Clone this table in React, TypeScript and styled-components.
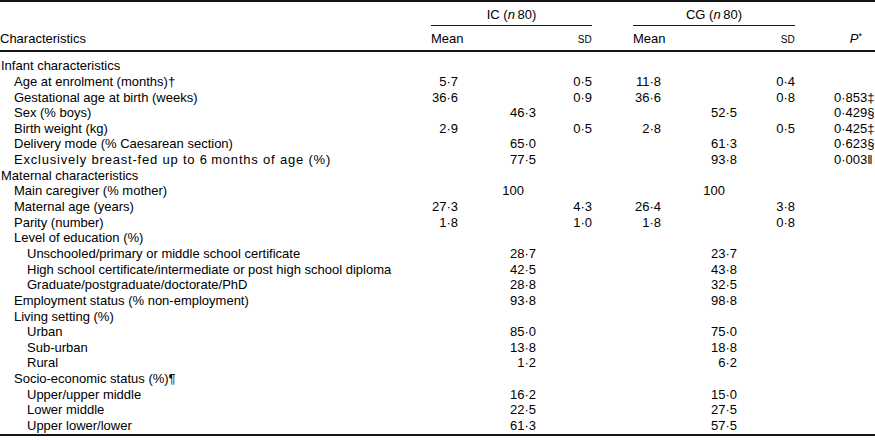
/**
 * App.tsx
 * -------
 * - Baseline characteristics table (IC vs CG), journal style.
 * - Thick top / bottom rules, thin spanner rules under the group headings.
 * - Values right aligned per column, P values left aligned.
 */

import styled, { createGlobalStyle } from 'styled-components';

const GlobalStyle = createGlobalStyle`
  html, body {
    margin: 0;
    padding: 0;
    background: #ffffff;
  }
`;

const RULE = '#161616';

const Table = styled.table`
  width: 875px;
  table-layout: fixed;
  border-collapse: separate;
  border-spacing: 0;
  border-top: 2px solid ${RULE};
  border-bottom: 2px solid ${RULE};
  font-family: 'Liberation Sans', Arial, Helvetica, sans-serif;
  font-size: 13px;
  color: #000000;
`;

/** Group heading row (IC / CG) */
const GroupCell = styled.th<{ $rule?: boolean }>`
  padding: 5px 0 2.4px;
  line-height: 15.6px;
  font-weight: 400;
  text-align: center;
  white-space: nowrap;
  border-bottom: ${({ $rule }) => ($rule ? `1px solid ${RULE}` : 'none')};
`;

/** Column heading row (Characteristics / Mean / SD / P) */
const HeadCell = styled.th<{ $align?: 'left' | 'right'; $pr?: number }>`
  padding: 4.6px ${({ $pr }) => $pr ?? 0}px 2.7px 0;
  line-height: 15.6px;
  font-weight: 400;
  text-align: ${({ $align }) => $align ?? 'left'};
  white-space: nowrap;
  border-bottom: 2px solid ${RULE};
`;

const SmallCaps = styled.span`
  font-size: 10px;
  letter-spacing: 0.2px;
`;

const Italic = styled.i`
  font-style: italic;
`;

const Star = styled.sup`
  font-size: 9px;
  vertical-align: 4px;
  line-height: 0;
`;

const BodyRow = styled.tr<{ $first?: boolean }>`
  & > td {
    padding-top: ${({ $first }) => ($first ? 6.4 : 0)}px;
  }
`;

const Label = styled.td<{ $level: number; $spread?: boolean }>`
  padding: 0 0 0 ${({ $level }) => 1 + $level * 13}px;
  line-height: 15.64px;
  white-space: nowrap;
  letter-spacing: ${({ $spread }) => ($spread ? '0.8px' : 'normal')};
`;

/** Numeric cell: right aligned, `whole` values sit on the decimal point */
const Num = styled.td<{ $whole?: boolean }>`
  padding: 0 ${({ $whole }) => ($whole ? 12 : 0)}px 0 0;
  line-height: 15.64px;
  text-align: right;
  white-space: nowrap;
`;

const PCell = styled.td`
  padding: 0;
  line-height: 15.64px;
  text-align: left;
  white-space: nowrap;
`;

type Row = {
  label: string;
  level: number;
  spread?: boolean;
  ic?: [string?, string?, string?];
  cg?: [string?, string?, string?];
  p?: string;
};

const rows: Row[] = [
  { label: 'Infant characteristics', level: 0 },
  { label: 'Age at enrolment (months)†', level: 1, ic: ['5·7', '', '0·5'], cg: ['11·8', '', '0·4'] },
  { label: 'Gestational age at birth (weeks)', level: 1, ic: ['36·6', '', '0·9'], cg: ['36·6', '', '0·8'], p: '0·853‡' },
  { label: 'Sex (% boys)', level: 1, ic: ['', '46·3', ''], cg: ['', '52·5', ''], p: '0·429§' },
  { label: 'Birth weight (kg)', level: 1, ic: ['2·9', '', '0·5'], cg: ['2·8', '', '0·5'], p: '0·425‡' },
  { label: 'Delivery mode (% Caesarean section)', level: 1, ic: ['', '65·0', ''], cg: ['', '61·3', ''], p: '0·623§' },
  {
    label: 'Exclusively breast-fed up to 6\u2009months of age (%)',
    level: 1,
    spread: true,
    ic: ['', '77·5', ''],
    cg: ['', '93·8', ''],
    p: '0·003‖',
  },
  { label: 'Maternal characteristics', level: 0 },
  { label: 'Main caregiver (% mother)', level: 1, ic: ['', '100', ''], cg: ['', '100', ''] },
  { label: 'Maternal age (years)', level: 1, ic: ['27·3', '', '4·3'], cg: ['26·4', '', '3·8'] },
  { label: 'Parity (number)', level: 1, ic: ['1·8', '', '1·0'], cg: ['1·8', '', '0·8'] },
  { label: 'Level of education (%)', level: 1 },
  { label: 'Unschooled/primary or middle school certificate', level: 2, ic: ['', '28·7', ''], cg: ['', '23·7', ''] },
  { label: 'High school certificate/intermediate or post high school diploma', level: 2, ic: ['', '42·5', ''], cg: ['', '43·8', ''] },
  { label: 'Graduate/postgraduate/doctorate/PhD', level: 2, ic: ['', '28·8', ''], cg: ['', '32·5', ''] },
  { label: 'Employment status (% non-employment)', level: 1, ic: ['', '93·8', ''], cg: ['', '98·8', ''] },
  { label: 'Living setting (%)', level: 1 },
  { label: 'Urban', level: 2, ic: ['', '85·0', ''], cg: ['', '75·0', ''] },
  { label: 'Sub-urban', level: 2, ic: ['', '13·8', ''], cg: ['', '18·8', ''] },
  { label: 'Rural', level: 2, ic: ['', '1·2', ''], cg: ['', '6·2', ''] },
  { label: 'Socio-economic status (%)¶', level: 1 },
  { label: 'Upper/upper middle', level: 2, ic: ['', '16·2', ''], cg: ['', '15·0', ''] },
  { label: 'Lower middle', level: 2, ic: ['', '22·5', ''], cg: ['', '27·5', ''] },
  { label: 'Upper lower/lower', level: 2, ic: ['', '61·3', ''], cg: ['', '57·5', ''] },
];

/* column right edges: 431 | 458 | 536 | 592 | 633 | 661 | 737 | 795 | 834 | 875 */
const widths = [431, 27, 78, 56, 41, 28, 76, 58, 39, 41];

const isWhole = (v?: string) => !!v && !v.includes('·');

function GroupValues({ vals }: { vals?: [string?, string?, string?] }) {
  const [mean, mid, sd] = vals ?? [];
  return (
    <>
      <Num>{mean}</Num>
      <Num $whole={isWhole(mid)}>{mid}</Num>
      <Num>{sd}</Num>
    </>
  );
}

export default function App() {
  return (
    <>
      <GlobalStyle />
      <Table>
        <colgroup>
          {widths.map((w, i) => (
            <col key={i} style={{ width: w }} />
          ))}
        </colgroup>
        <thead>
          <tr>
            <GroupCell />
            <GroupCell colSpan={3} $rule>
              IC (<Italic>n</Italic>&#8201;80)
            </GroupCell>
            <GroupCell />
            <GroupCell colSpan={3} $rule>
              CG (<Italic>n</Italic>&#8201;80)
            </GroupCell>
            <GroupCell colSpan={2} />
          </tr>
          <tr>
            <HeadCell>Characteristics</HeadCell>
            <HeadCell colSpan={2}>Mean</HeadCell>
            <HeadCell $align="right">
              <SmallCaps>SD</SmallCaps>
            </HeadCell>
            <HeadCell />
            <HeadCell colSpan={2}>Mean</HeadCell>
            <HeadCell $align="right">
              <SmallCaps>SD</SmallCaps>
            </HeadCell>
            <HeadCell colSpan={2} $align="right" $pr={13}>
              <Italic>P</Italic>
              <Star>*</Star>
            </HeadCell>
          </tr>
        </thead>
        <tbody>
          {rows.map((r, i) => (
            <BodyRow key={r.label} $first={i === 0}>
              <Label $level={r.level} $spread={r.spread}>
                {r.label}
              </Label>
              <GroupValues vals={r.ic} />
              <Num />
              <GroupValues vals={r.cg} />
              <Num />
              <PCell>{r.p}</PCell>
            </BodyRow>
          ))}
        </tbody>
      </Table>
    </>
  );
}
